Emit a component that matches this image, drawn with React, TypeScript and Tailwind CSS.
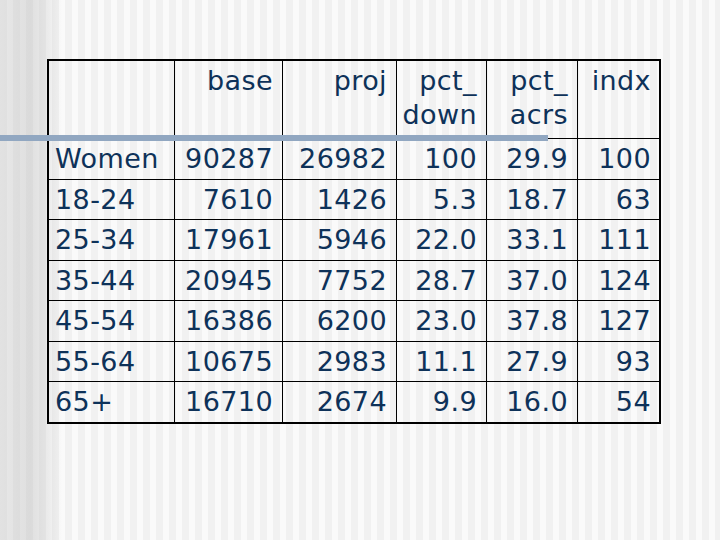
const HEAD = ['', 'base', 'proj', 'pct_\ndown', 'pct_\nacrs', 'indx']

const ROWS = [
  ['Women', '90287', '26982', '100', '29.9', '100'],
  ['18-24', '7610', '1426', '5.3', '18.7', '63'],
  ['25-34', '17961', '5946', '22.0', '33.1', '111'],
  ['35-44', '20945', '7752', '28.7', '37.0', '124'],
  ['45-54', '16386', '6200', '23.0', '37.8', '127'],
  ['55-64', '10675', '2983', '11.1', '27.9', '93'],
  ['65+', '16710', '2674', '9.9', '16.0', '54'],
]

function Cell({ text, col, last }: { text: string; col: number; last: boolean }) {
  const edge = col === 5 ? 'pr-[8px]' : 'border-r border-black pr-[9px]'
  const align = col === 0 ? 'text-left pl-[6px]' : 'text-right'
  return (
    <div className={`box-border whitespace-pre-line pt-[3px] ${align} ${edge} ${last ? '' : 'border-b border-black'}`}>
      {text}
    </div>
  )
}

export default function App() {
  return (
    <div
      className="relative w-[720px] h-[540px] overflow-hidden pt-[59px] pl-[47px] bg-[image:linear-gradient(90deg,rgba(190,190,190,0.3)_0px,rgba(190,190,190,0.45)_30px,rgba(190,190,190,0.25)_48px,rgba(190,190,190,0)_62px),repeating-linear-gradient(90deg,#f1f1f1_0px,#f1f1f1_7px,#fafafa_7px,#fafafa_13px)]"
      style={{ fontFamily: '"DejaVu Sans", Verdana, sans-serif' }}
    >
      <div className="grid w-fit grid-cols-[126px_108px_114px_90px_91px_81px] grid-rows-[78px_41px_40px_41px_40px_41px_40px_40px] border-2 border-black text-[27px] leading-[34px] tracking-[0.4px] text-[#0e3259]">
        {HEAD.map((h, i) => (
          <Cell key={'h' + i} text={h} col={i} last={false} />
        ))}
        {ROWS.map((r, ri) =>
          r.map((c, ci) => (
            <Cell key={ri + '-' + ci} text={c} col={ci} last={ri === ROWS.length - 1} />
          ))
        )}
      </div>
      <div className="absolute left-0 top-[135px] h-[6px] w-[548px] bg-[#91a7c1]" />
    </div>
  )
}
